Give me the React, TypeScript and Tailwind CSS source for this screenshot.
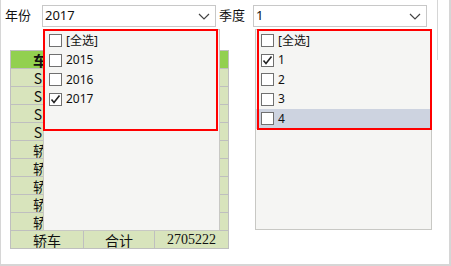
import { ChevronDown } from "lucide-react";

const rows = [
  ["SUV", "", ""],
  ["SUV", "", ""],
  ["SUV", "", ""],
  ["SUV", "", ""],
  ["轿车", "", ""],
  ["轿车", "", ""],
  ["轿车", "", ""],
  ["轿车", "", ""],
  ["轿车", "", ""],
  ["轿车", "合计", "2705222"],
];

const Check = ({ checked }: { checked: boolean }) => (
  <span className="w-[13px] h-[13px] border border-[#707070] bg-white flex items-center justify-center shrink-0">
    {checked && (
      <svg width="11" height="11" viewBox="0 0 11 11">
        <path d="M1.5 5.5 L4 8.5 L9.5 1.5" fill="none" stroke="#222" strokeWidth="1.6" />
      </svg>
    )}
  </span>
);

const Dropdown = ({
  items,
  checked,
  hover,
  className,
}: {
  items: string[];
  checked: number;
  hover?: number;
  className: string;
}) => (
  <div className={`absolute bg-[#f5f5f3] border border-[#c8c8c4] ${className}`}>
    <div className="pt-[1px]">
      {items.map((it, i) => (
        <div
          key={it}
          className={`h-[19.5px] flex items-center gap-[4px] pl-[5px] text-[12px] text-[#111] ${
            i === hover ? "bg-[#cdd3e0]" : ""
          }`}
        >
          <Check checked={i === checked} />
          <span>{it}</span>
        </div>
      ))}
    </div>
  </div>
);

const Chevron = () => (
  <svg width="12" height="7" viewBox="0 0 12 7">
    <path d="M1 1 L6 6 L11 1" fill="none" stroke="#444" strokeWidth="1.2" />
  </svg>
);

export default function App() {
  return (
    <div
      className="relative w-[451px] h-[266px] bg-white border-l border-r-2 border-b-2 border-[#d6d6d6] overflow-hidden"
      style={{ fontFamily: '"Noto Sans", "Noto Sans CJK SC", sans-serif' }}
    >
      <div className="absolute left-[436px] top-0 w-[1px] h-[60px] bg-[#d6d6d6]" />
      <div className="flex items-center h-[22px] mt-[5px] text-[13px] text-[#111]">
        <span className="w-[41px] pl-[4px]">年份</span>
        <div className="w-[174px] h-[22px] border border-[#c8c8c8] flex items-center justify-between pl-[2px] pr-[5px]">
          <span>2017</span>
          <Chevron />
        </div>
        <span className="w-[37px] pl-[3px]">季度</span>
        <div className="w-[174px] h-[22px] border border-[#c8c8c8] flex items-center justify-between pl-[2px] pr-[5px]">
          <span>1</span>
          <Chevron />
        </div>
      </div>

      <table
        className="ml-[9px] mt-[23px] border-collapse text-[14px] text-[#111]"
        style={{ fontFamily: '"Noto Sans CJK SC", sans-serif' }}
      >
        <thead>
          <tr className="h-[18px] bg-[#92d050]">
            <th className="w-[73px] border border-[#bfbfbf] font-bold leading-none">车型</th>
            <th className="w-[71px] border border-[#bfbfbf] font-bold leading-none">类型</th>
            <th className="w-[74px] border border-[#bfbfbf] font-bold leading-none">销量</th>
          </tr>
        </thead>
        <tbody>
          {rows.map((r, i) => (
            <tr key={i} className="h-[18px] bg-[#d8e4bc]">
              <td className="border border-[#bfbfbf] text-center leading-none">{r[0]}</td>
              <td className="border border-[#bfbfbf] text-center leading-none">{r[1]}</td>
              <td
                className="border border-[#bfbfbf] text-center leading-none"
                style={{ fontFamily: '"Liberation Serif", serif' }}
              >
                {r[2]}
              </td>
            </tr>
          ))}
        </tbody>
      </table>

      <Dropdown
        items={["[全选]", "2015", "2016", "2017"]}
        checked={3}
        className="left-[42px] top-[29px] w-[177px] h-[202px]"
      />
      <div className="absolute left-[42px] top-[29px] w-[175px] h-[102px] border-2 border-[#ff0000]" />

      <Dropdown
        items={["[全选]", "1", "2", "3", "4"]}
        checked={1}
        hover={4}
        className="left-[254px] top-[29px] w-[177px] h-[201px]"
      />
      <div className="absolute left-[256px] top-[29px] w-[175px] h-[101px] border-2 border-[#ff0000]" />
    </div>
  );
}
